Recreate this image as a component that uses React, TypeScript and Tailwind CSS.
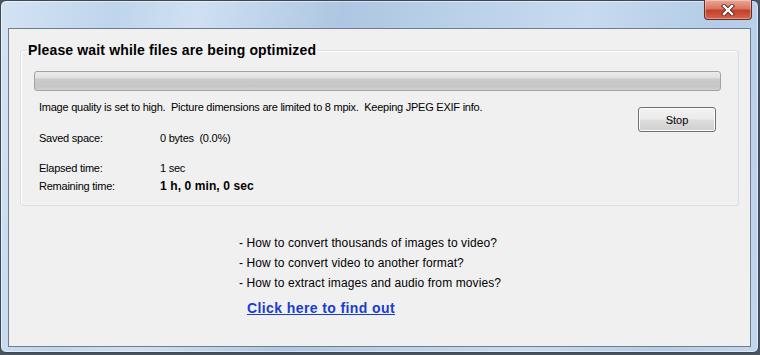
import React from "react";

const rows = [
  { label: "Saved space:", value: "0 bytes  (0.0%)", bold: false, gap: "mt-[17px]" },
  { label: "Elapsed time:", value: "1 sec", bold: false, gap: "mt-[16px]" },
  { label: "Remaining time:", value: "1 h, 0 min, 0 sec", bold: true, gap: "mt-[4px]" },
];

const questions = [
  "- How to convert thousands of images to video?",
  "- How to convert video to another format?",
  "- How to extract images and audio from movies?",
];

function CloseButton() {
  return (
    <div className="flex h-[20px] w-[48px] items-center justify-center rounded-b-[4px] border border-t-0 border-[#6b2a20] bg-[linear-gradient(180deg,#e9a797_0%,#d8755f_45%,#c4402a_55%,#d4654c_100%)] shadow-[inset_0_0_0_1px_rgba(255,255,255,0.35)]">
      <svg width="14" height="12" viewBox="0 0 14 12">
        <path d="M3 2 L11 10 M11 2 L3 10" stroke="#5a2a22" strokeWidth="4.2" strokeLinecap="square" />
        <path d="M3 2 L11 10 M11 2 L3 10" stroke="#ffffff" strokeWidth="2.4" strokeLinecap="square" />
      </svg>
    </div>
  );
}

export default function App() {
  return (
    <div className="h-[355px] w-[760px] overflow-hidden bg-[#4a5561] font-['Liberation_Sans',Arial,sans-serif] text-black">
      <div className="flex h-[353px] w-[759px] flex-col rounded-[6px] border border-[#3d4852] bg-[linear-gradient(100deg,#d3e3f3_0%,#bfd5ec_14%,#cfe0f2_24%,#adc7e2_42%,#bcd2ea_58%,#c7daef_72%,#b3cce7_88%,#c3d7ee_100%)] px-[7px] pb-[5px] shadow-[inset_0_0_0_1px_rgba(255,255,255,0.5)]">
        <div className="flex h-[27px] justify-end">
          <div className="-mt-px mr-[-1px]">
            <CloseButton />
          </div>
        </div>

        <div className="flex-1 border border-[#6f7d8c] bg-[#f0f0f0]">
          <fieldset className="mx-[11px] mt-[13px] w-[719px] rounded-[3px] border border-[#d5dfe5] pb-[12px] shadow-[inset_1px_1px_0_#ffffff]">
            <legend className="ml-[6px] px-px text-[14px] font-bold leading-[16px] tracking-[0.15px]">
              Please wait while files are being optimized
            </legend>

            <div className="mr-[17px] ml-[13px] mt-[13px] h-[20px] rounded-[3px] border border-[#a3a3a3] bg-[linear-gradient(180deg,#eaeaea_0%,#e2e2e2_30%,#cbcbcb_40%,#c6c6c6_80%,#d2d2d2_100%)]" />

            <div className="mt-[9px] flex pl-[18px] pr-[22px] text-[11px] leading-[14px]">
              <div className="flex-1 tracking-[-0.24px]">
                <p className="whitespace-pre">
                  Image quality is set to high.  Picture dimensions are limited to 8 mpix.  Keeping JPEG EXIF info.
                </p>
                {rows.map((row) => (
                  <div key={row.label} className={`flex ${row.gap}`}>
                    <span className="w-[121px]">{row.label}</span>
                    <span
                      className={
                        row.bold
                          ? "whitespace-pre text-[12px] font-bold tracking-[0.1px]"
                          : "whitespace-pre"
                      }
                    >
                      {row.value}
                    </span>
                  </div>
                ))}
              </div>
              <button
                className="mt-[7px] h-[25px] w-[78px] rounded-[3px] border border-[#707070] bg-[linear-gradient(180deg,#f2f2f2_0%,#ebebeb_48%,#dddddd_52%,#cfcfcf_100%)] text-[11px] shadow-[inset_0_0_0_1px_#fcfcfc]"
                type="button"
              >
                Stop
              </button>
            </div>
          </fieldset>

          <div className="ml-[230px] mt-[27px] text-[12px] leading-[20px] tracking-[0.1px]">
            {questions.map((q) => (
              <p key={q}>{q}</p>
            ))}
            <a
              className="ml-[8px] mt-[7px] block text-[14px] font-bold leading-[16px] tracking-[0.4px] text-[#1a3ccf] underline"
              href="#"
            >
              Click here to find out
            </a>
          </div>
        </div>
      </div>
    </div>
  );
}
